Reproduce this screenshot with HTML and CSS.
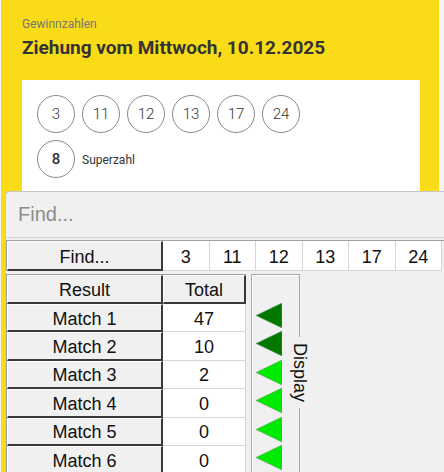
FILE: index.html
```html
<!DOCTYPE html>
<html lang="de">
<head>
    <meta charset="UTF-8">
    <meta name="viewport" content="width=device-width, initial-scale=1.0">
    <title>Gewinnzahlen</title>
    <link rel="stylesheet" href="styles.css">
</head>
<body>
    <div class="page">
        <section class="draw">
            <div class="draw-label">Gewinnzahlen</div>
            <h1 class="draw-title">Ziehung vom Mittwoch, 10.12.2025</h1>
            <div class="card">
                <div class="balls">
                    <span class="ball">3</span>
                    <span class="ball">11</span>
                    <span class="ball">12</span>
                    <span class="ball">13</span>
                    <span class="ball">17</span>
                    <span class="ball">24</span>
                </div>
                <div class="balls">
                    <span class="ball ball-super">8</span>
                    <span class="super-label">Superzahl</span>
                </div>
            </div>
        </section>

        <!-- Fenster der Auswertung, liegt über der Karte -->
        <div class="finder">
            <div class="find-input">Find...</div>

            <div class="numbers-row">
                <div class="btn">Find...</div>
                <div class="num">3</div>
                <div class="num">11</div>
                <div class="num">12</div>
                <div class="num">13</div>
                <div class="num">17</div>
                <div class="num">24</div>
            </div>

            <div class="lower">
                <div class="results">
                    <div class="btn head">Result</div>
                    <div class="btn head">Total</div>
                    <div class="btn">Match 1</div><div class="val">47</div>
                    <div class="btn">Match 2</div><div class="val">10</div>
                    <div class="btn">Match 3</div><div class="val">2</div>
                    <div class="btn">Match 4</div><div class="val">0</div>
                    <div class="btn">Match 5</div><div class="val">0</div>
                    <div class="btn">Match 6</div><div class="val">0</div>
                </div>

                <div class="display-box">
                    <span class="display-label">Display</span>
                    <svg class="arrow dark" viewBox="0 0 26 25"><polygon points="0,12.5 26,0 26,25"/></svg>
                    <svg class="arrow dark" viewBox="0 0 26 25"><polygon points="0,12.5 26,0 26,25"/></svg>
                    <svg class="arrow" viewBox="0 0 26 25"><polygon points="0,12.5 26,0 26,25"/></svg>
                    <svg class="arrow" viewBox="0 0 26 25"><polygon points="0,12.5 26,0 26,25"/></svg>
                    <svg class="arrow" viewBox="0 0 26 25"><polygon points="0,12.5 26,0 26,25"/></svg>
                    <svg class="arrow" viewBox="0 0 26 25"><polygon points="0,12.5 26,0 26,25"/></svg>
                </div>
            </div>
        </div>
    </div>
</body>
</html>
```

FILE: styles.css
```css
body {
    margin: 0;
    background-color: #f4f4f4;
    font-family: Roboto, "Noto Sans", sans-serif;
}
.page {
    position: relative;
    height: 472px;
    overflow: hidden;
}
.draw {
    height: 100%;
    margin: 0 5px 0 1px;
    padding: 16px 0 0 21px;
    box-sizing: border-box;
    background-color: #fadb17;
}
.draw-label {
    font-size: 12px;
    color: #777;
    line-height: 16px;
}
.draw-title {
    margin: 3px 0 0;
    font-size: 19px;
    font-weight: 700;
    line-height: 26px;
    color: #333;
}
.card {
    width: 398px;
    margin-top: 19px;
    padding: 15px;
    box-sizing: border-box;
    height: 140px;
    background-color: white;
}
.balls {
    display: flex;
    align-items: center;
    gap: 7px;
    margin-bottom: 7px;
}
.ball {
    width: 36px;
    height: 36px;
    border: 1px solid #8a8a8a;
    border-radius: 50%;
    display: flex;
    justify-content: center;
    align-items: center;
    font-size: 15px;
    font-weight: 300;
    color: #333;
}
.ball-super {
    font-weight: 500;
}
.super-label {
    font-size: 12px;
    color: #333;
    margin-top: 2px;
}

/* Fenster */
.finder {
    position: absolute;
    top: 191px;
    left: 5px;
    right: 0;
    bottom: 0;
    background-color: #f0f0f0;
    border-top: 1px solid #c6c6c6;
    border-left: 1px solid #c6c6c6;
    border-top-left-radius: 5px;
    font-family: "Liberation Sans", Arial, sans-serif;
    color: #111;
}
.find-input {
    height: 45px;
    padding-left: 12px;
    display: flex;
    align-items: center;
    font-size: 20px;
    color: #8c8c8c;
    border-bottom: 1px solid #d4d4d4;
}
.numbers-row {
    display: grid;
    grid-template-columns: 156px repeat(6, 46.5px) 1px;
    height: 30px;
    margin-top: 2px;
    border-top: 1px solid #a0a0a0;
    border-left: 1px solid #a0a0a0;
}
.btn {
    display: flex;
    justify-content: center;
    align-items: center;
    padding-top: 3px;
    font-size: 18px;
    background-color: #f0f0f0;
    border-top: 1px solid #fff;
    border-left: 1px solid #fff;
    border-right: 2px solid #3a3a3a;
    border-bottom: 2px solid #3a3a3a;
}
.num {
    display: flex;
    justify-content: center;
    align-items: center;
    padding-top: 3px;
    font-size: 18px;
    background-color: white;
    border-right: 1px solid #d6d6d6;
    border-bottom: 1px solid #d6d6d6;
}
.lower {
    display: flex;
    align-items: flex-start;
    margin-top: 3px;
}
.results {
    display: grid;
    grid-template-columns: 156px 83px;
    grid-template-rows: 29px repeat(6, 28.4px);
    border-top: 1px solid #a0a0a0;
    border-left: 1px solid #a0a0a0;
}
.val {
    display: flex;
    justify-content: center;
    align-items: center;
    padding-top: 3px;
    font-size: 18px;
    background-color: white;
    border-right: 1px solid #d6d6d6;
    border-bottom: 1px solid #d6d6d6;
}
.display-box {
    position: relative;
    width: 49px;
    height: 200px;
    margin-left: 5px;
    padding: 28px 0 0 4px;
    box-sizing: border-box;
    display: flex;
    flex-direction: column;
    gap: 3.4px;
    border: 1px solid #a8a8a8;
    border-bottom: none;
    box-shadow: inset 1px 1px 0 #fff;
}
.display-label {
    position: absolute;
    top: 62px;
    right: -11px;
    writing-mode: vertical-rl;
    font-size: 18px;
    line-height: 20px;
    padding: 6px 0;
    background-color: #f0f0f0;
}
.arrow {
    width: 26px;
    height: 25px;
    flex-shrink: 0;
}
.arrow polygon {
    fill: #00ea00;
    stroke: #6a9a6a;
    stroke-width: 0.6;
}
.arrow.dark polygon {
    fill: #007800;
}
```
